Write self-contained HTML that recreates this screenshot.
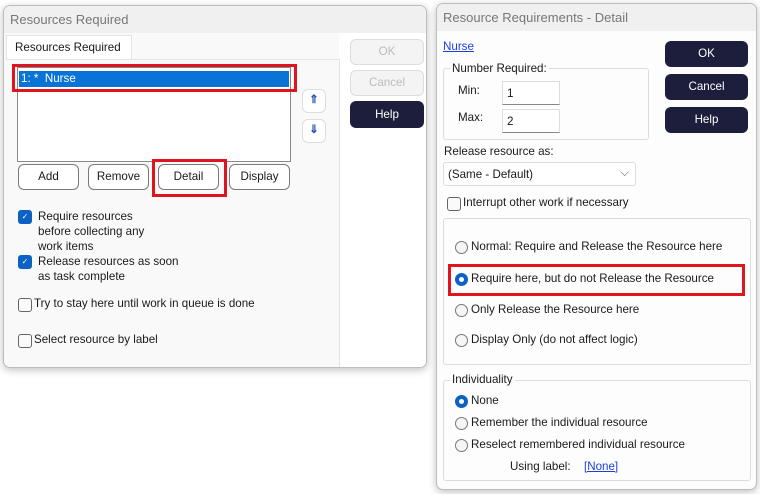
<!DOCTYPE html>
<html><head><style>
*{box-sizing:border-box;margin:0;padding:0}
body{width:760px;height:494px;background:#fff;position:relative;font-family:"Liberation Sans",sans-serif;font-size:11.6px;color:#1a1a1a;overflow:hidden}
.a{position:absolute}
.dlg{position:absolute;border:1px solid #bdbdbd;border-radius:7px;background:#f9f9f9;box-shadow:0 2px 8px rgba(0,0,0,.25);overflow:hidden}
.tt{position:absolute;left:0;top:0;right:0;height:27px;background:#f0f0f0;color:#777;font-size:13px;padding:6px 0 0 6px}
.btn{position:absolute;border:1px solid #7a7a7a;border-radius:6px;background:#fff;text-align:center;line-height:23px}
.dk{position:absolute;background:#1c1e3c;color:#fff;border-radius:6px;text-align:center}
.dis{position:absolute;background:#f4f4f4;border:1px solid #ddd;color:#bbb;border-radius:6px;text-align:center}
.cb{position:absolute;width:14px;height:14px;border:1px solid #666;border-radius:3px;background:#fafafa}
.cbc{position:absolute;width:14px;height:14px;border-radius:3px;background:#0b62c4;color:#fff;font-size:8px;text-align:center;line-height:14px}
.rd{position:absolute;width:13px;height:13px;border:1px solid #777;border-radius:50%;background:#f5f5f5}
.rds{position:absolute;width:13px;height:13px;border-radius:50%;background:#fff;border:4px solid #0b62c4}
.grp{position:absolute;border:1px solid #dcdcdc;border-radius:3px}
.red{position:absolute;border:3px solid #e0141e}
.lnk{color:#1a3fe0;text-decoration:underline}
</style></head><body>

<div class="dlg" style="left:3px;top:5px;width:424px;height:363px">
 <div class="tt">Resources Required</div>
 <div class="a" style="left:335px;top:27px;width:89px;height:336px;background:#fff"></div>
 <div class="a" style="left:2px;top:29px;width:126px;height:25px;background:#fff;border:1px solid #e3e3e3;border-bottom:none;padding:5px 0 0 8px">Resources Required</div>
 <div class="a" style="left:2px;top:53px;width:334px;height:310px;border-top:1px solid #e3e3e3;border-right:1px solid #e3e3e3"></div>
 <div class="a" style="left:13px;top:61px;width:274px;height:95px;background:#fff;border:1px solid #888"></div>
 <div class="a" style="left:15px;top:65px;width:270px;height:16px;background:#0a74d6;color:#fff;padding:1px 0 0 2px">1: *&nbsp; Nurse</div>
 <div class="red" style="left:8px;top:58px;width:285px;height:28px"></div>
 <div class="btn" style="left:298px;top:83px;width:24px;height:24px;border-color:#ddd;color:#1f4fb0;line-height:20px;font-weight:bold">⇑</div>
 <div class="btn" style="left:298px;top:113px;width:24px;height:24px;border-color:#ddd;color:#1f4fb0;line-height:20px;font-weight:bold">⇓</div>
 <div class="btn" style="left:14px;top:158px;width:61px;height:26px">Add</div>
 <div class="btn" style="left:84px;top:158px;width:61px;height:26px">Remove</div>
 <div class="btn" style="left:154px;top:158px;width:61px;height:26px">Detail</div>
 <div class="red" style="left:148px;top:153px;width:75px;height:38px"></div>
 <div class="btn" style="left:225px;top:158px;width:61px;height:26px">Display</div>
 <div class="cbc" style="left:14px;top:204px">✓</div>
 <div class="a" style="left:34px;top:203px;line-height:15px">Require resources<br>before collecting any<br>work items</div>
 <div class="cbc" style="left:14px;top:249px">✓</div>
 <div class="a" style="left:34px;top:248px;line-height:15px">Release resources as soon<br>as task complete</div>
 <div class="cb" style="left:14px;top:292px"></div>
 <div class="a" style="left:30px;top:291px">Try to stay here until work in queue is done</div>
 <div class="cb" style="left:14px;top:328px"></div>
 <div class="a" style="left:30px;top:327px">Select resource by label</div>
 <div class="dis" style="left:346px;top:33px;width:74px;height:26px;line-height:24px">OK</div>
 <div class="dis" style="left:346px;top:64px;width:74px;height:26px;line-height:24px">Cancel</div>
 <div class="dk" style="left:346px;top:95px;width:74px;height:27px;line-height:27px">Help</div>
</div>

<div class="dlg" style="left:436px;top:3px;width:321px;height:487px;background:#fdfdfd">
 <div class="tt">Resource Requirements - Detail</div>
 <div class="a lnk" style="left:6px;top:36px">Nurse</div>
 <div class="dk" style="left:228px;top:37px;width:83px;height:26px;line-height:26px">OK</div>
 <div class="dk" style="left:228px;top:70px;width:83px;height:26px;line-height:26px">Cancel</div>
 <div class="dk" style="left:228px;top:103px;width:83px;height:26px;line-height:26px">Help</div>
 <div class="grp" style="left:6px;top:64px;width:206px;height:72px"></div>
 <div class="a" style="left:13px;top:58px;background:#fdfdfd;padding:0 2px">Number Required:</div>
 <div class="a" style="left:21px;top:80px">Min:</div>
 <div class="a" style="left:65px;top:77px;width:58px;height:24px;background:#fff;border:1px solid #ddd;border-bottom:1px solid #888;padding:5px 0 0 4px">1</div>
 <div class="a" style="left:21px;top:107px">Max:</div>
 <div class="a" style="left:65px;top:105px;width:58px;height:24px;background:#fff;border:1px solid #ddd;border-bottom:1px solid #888;padding:5px 0 0 4px">2</div>
 <div class="a" style="left:7px;top:141px">Release resource as:</div>
 <div class="a" style="left:6px;top:158px;width:193px;height:24px;background:#fff;border:1px solid #ddd;border-radius:3px;padding:5px 0 0 4px">(Same - Default)<span style="position:absolute;right:6px;top:3px;color:#666">⌵</span></div>
 <div class="cb" style="left:10px;top:193px"></div>
 <div class="a" style="left:26px;top:192px">Interrupt other work if necessary</div>
 <div class="grp" style="left:6px;top:214px;width:308px;height:147px"></div>
 <div class="rd" style="left:18px;top:237px"></div>
 <div class="a" style="left:34px;top:236px">Normal: Require and Release the Resource here</div>
 <div class="rds" style="left:18px;top:269px"></div>
 <div class="a" style="left:34px;top:268px">Require here, but do not Release the Resource</div>
 <div class="red" style="left:11px;top:260px;width:297px;height:32px"></div>
 <div class="rd" style="left:18px;top:300px"></div>
 <div class="a" style="left:34px;top:299px">Only Release the Resource here</div>
 <div class="rd" style="left:18px;top:330px"></div>
 <div class="a" style="left:34px;top:329px">Display Only (do not affect logic)</div>
 <div class="grp" style="left:6px;top:376px;width:308px;height:101px"></div>
 <div class="a" style="left:13px;top:369px;background:#fdfdfd;padding:0 2px">Individuality</div>
 <div class="rds" style="left:18px;top:391px"></div>
 <div class="a" style="left:34px;top:390px">None</div>
 <div class="rd" style="left:18px;top:413px"></div>
 <div class="a" style="left:34px;top:412px">Remember the individual resource</div>
 <div class="rd" style="left:18px;top:435px"></div>
 <div class="a" style="left:34px;top:434px">Reselect remembered individual resource</div>
 <div class="a" style="left:73px;top:456px">Using label:</div>
 <div class="a lnk" style="left:147px;top:456px">[None]</div>
</div>
</body></html>
